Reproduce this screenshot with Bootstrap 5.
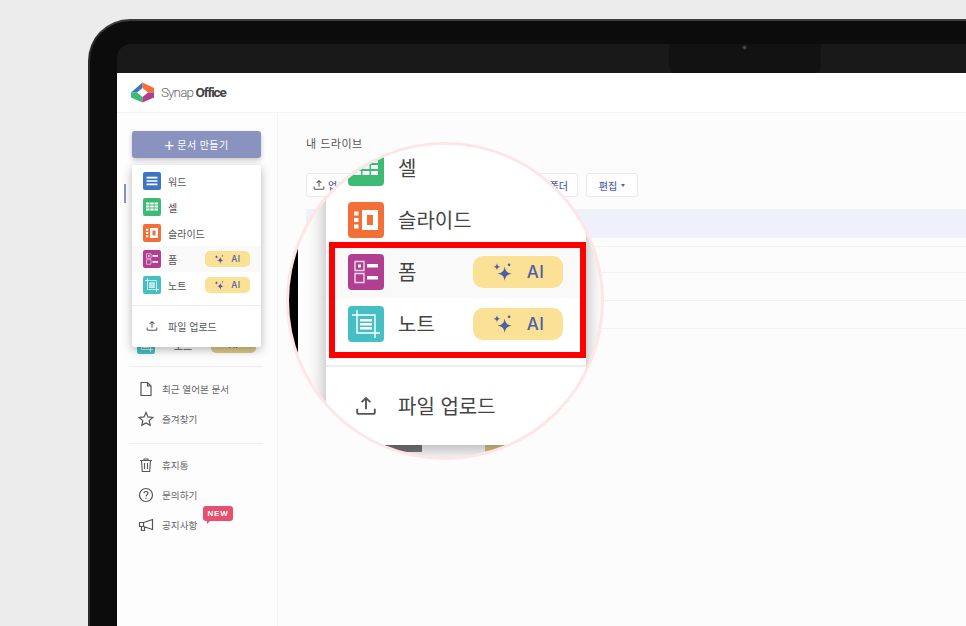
<!DOCTYPE html>
<html lang="ko">
<head>
    <meta charset="UTF-8">
    <title>Synap Office</title>
    <link href="https://cdn.jsdelivr.net/npm/bootstrap@5.3.0/dist/css/bootstrap.min.css" rel="stylesheet">
    <style>
        html, body { height: 100%; }
        body { margin: 0; width: 966px; height: 626px; overflow: hidden; background: #ececec; font-family: "Noto Sans CJK KR", "Noto Sans", sans-serif; color: #555; position: relative; }
        .laptop { margin: 19px 0 0 88px; height: 607px; background: #0c0c0c; border-radius: 42px 0 0 0; border-top: 2px solid #3c3d40; border-left: 2px solid #2a2b2e; padding: 23px 0 0 27px; }
        .bezel { height: 100%; background: #191919; border-radius: 14px 0 0 0; }
        .bezel-top { height: 29px; }
        .notch { position: relative; margin-left: 552px; width: 152px; height: 29px; background: #121212; border-radius: 0 0 6px 6px; }
        .camera { position: absolute; left: 73px; top: 1px; width: 5px; height: 5px; border-radius: 50%; background: #4a4a4a; border: 1px solid #222; }
        .screen { height: 553px; background: #fcfcfc; }
        .top-bar { height: 40px; background: #fff; border-bottom: 1px solid #f3f3f3; padding: 0 0 0 13px; }
        .logo-text { font-family: Roboto, sans-serif; font-size: 13.5px; letter-spacing: -.9px; margin-left: 6px; color: #666; font-weight: 300; }
        .logo-text b { color: #444; font-weight: 700; letter-spacing: -1.1px; }
        .side { position: relative; width: 161px; flex: none; background: #fdfdfd; border-right: 1px solid #f3f3f3; padding: 18px 15px 0 13px; }
        .make-btn { width: 129px; height: 27px; margin-left: 2px; padding: 0; border: 0; border-radius: 3px; background: #8a92c0; color: #fff; font-size: 10px; letter-spacing: .4px; box-shadow: 0 2px 5px rgba(0,0,0,.22); }
        .make-btn:hover { background: #8a92c0; color: #fff; }
        .plus { font-size: 17px; line-height: 1; margin-right: 3px; font-weight: 400; }
        .side-mark { position: absolute; left: 7px; top: 71px; width: 2px; height: 19px; background: #8a92c0; }
        .hidden-row { margin: 178px 0 0 7px; height: 18px; padding-right: 6px; font-size: 10px; }
        .side-line { border-top: 1px solid #ececec; margin-top: 12px; width: 133px; }
        .side-line.second { margin-top: 9px; }
        .side-link { height: 30px; padding-left: 8px; font-size: 9.6px; color: #666; }
        .side-link.after-line { margin-top: 7px; }
        .side-link.after-second { margin-top: 6px; }
        .side-link svg { width: 16px; height: 16px; flex: none; margin-right: 8px; color: #555; }
        .new-tag { position: absolute; left: 73px; top: -4px; width: 30px; height: 15px; background: #e8506f; color: #fff; border-radius: 3px; font: 700 8px/15px "Liberation Sans", sans-serif; letter-spacing: .8px; text-align: center; }
        .new-tag::after { content: ""; position: absolute; left: 4px; bottom: -3px; border-left: 3px solid #e8506f; border-bottom: 3px solid transparent; }
        .pop-menu { position: absolute; left: 15px; top: 52px; width: 129px; height: 182px; background: #fff; border-radius: 2px; box-shadow: 0 3px 10px rgba(0,0,0,.28); padding-top: 3px; font-size: 10px; color: #555; }
        .pop-row { height: 26px; padding: 0 11px; }
        .pop-row.on { background: #f9f9f9; }
        .pop-row svg.app { width: 18px; height: 18px; margin-right: 7px; flex: none; }
        .ai-tag { background: #fbe196; border-radius: 5px; width: 45px; height: 16px; color: #4f5fa5; font: 500 8.5px/16px Inter, sans-serif; letter-spacing: .5px; gap: 6px; }
        .ai-tag svg { width: 11px; height: 11px; }
        .ai-dim { background: #dfc98a; }
        .pop-line { border-top: 1px solid #ececec; margin-top: 7px; }
        .pop-up { height: 40px; padding: 0 14px; }
        .pop-up svg { width: 12px; height: 12px; margin-right: 10px; color: #555; }
        .main-area { padding: 21px 0 0 28px; }
        .drive-title { font-size: 11px; line-height: 18px; color: #555; letter-spacing: .5px; }
        .tools { margin-top: 21px; height: 24px; }
        .tool-btn { height: 24px; background: #fff; border: 1px solid #e9e9e9; border-radius: 3px; color: #5464a8; font-size: 10px; font-weight: 500; padding: 0 9px; }
        .tool-btn svg { width: 12px; height: 12px; margin-right: 3px; color: #555; }
        .tool-one { width: 90px; justify-content: flex-start; padding-left: 6px; }
        .tool-two { width: 82px; margin-left: 100px; justify-content: flex-end; }
        .tool-three { width: 52px; margin-left: 8px; }
        .caret-down { border-top: 3px solid #5464a8; border-left: 2.5px solid transparent; border-right: 2.5px solid transparent; margin-left: 4px; }
        .file-list { margin: 12px 0 0 0; }
        .file-sel { height: 29px; background: #eef1fa; }
        .file-row { border-bottom: 1px solid #f2f2f2; height: 28px; }
        .file-row.first { height: 9px; }
        .file-row.short { height: 26px; }
        .lens { position: absolute; left: 286px; top: 142px; width: 318px; height: 318px; border: 3px solid #fde6e5; border-radius: 50%; background: #fdfdfd; overflow: hidden; }
        .lens-dark { width: 9px; flex: none; background: #000; }
        .lens-body { margin-left: 28px; width: 260px; margin-top: -3px; }
        .lens-menu { position: relative; z-index: 1; height: 303px; background: #fff; box-shadow: 0 4px 18px rgba(0,0,0,.32); color: #444; font-size: 20px; }
        .lens-row { height: 52px; padding-left: 22px; }
        .lens-row.on { background: #f9f9f9; }
        .lens-row svg.app { width: 36px; height: 36px; margin-right: 14px; flex: none; }
        .lens-ai { width: 90px; height: 32px; background: #fbe196; border-radius: 10px; color: #4f5fa5; font: 500 17px/32px Inter, sans-serif; letter-spacing: .5px; gap: 13px; margin-left: auto; margin-right: 23px; }
        .lens-ai svg { width: 22px; height: 22px; }
        .lens-line { border-top: 2px solid #ececec; margin-top: 15px; }
        .lens-up { height: 78px; padding-left: 29px; }
        .lens-up svg { width: 22px; height: 22px; margin-right: 21px; color: #555; }
        .lens-peek { height: 7px; padding-left: 59px; gap: 63px; }
        .peek-dark { width: 37px; height: 7px; background: #777; }
        .peek-tan { width: 40px; height: 7px; background: #d9c486; }
        .red-box { position: absolute; left: 40px; top: 97px; width: 257px; height: 116px; border: 6px solid #f00; z-index: 2; }
    </style>
</head>
<body>
    <svg width="0" height="0" class="position-absolute">
        <symbol id="i-word" viewBox="0 0 36 36"><rect width="36" height="36" rx="4" fill="#3f74c0"/><path d="M7 9.500h22v3.400H7zM7 16.300h22v3.400H7zM7 23.100h22v3.400H7z" fill="#fff"/></symbol>
        <symbol id="i-cell" viewBox="0 0 36 36"><rect width="36" height="36" rx="4" fill="#3dba74"/><path d="M6 9h7v4H6zM14.500 9h7v4h-7zM23 9h7v4h-7zM6 15h7v4H6zM14.500 15h7v4h-7zM23 15h7v4h-7zM6 21h7v4H6zM14.500 21h7v4h-7zM23 21h7v4h-7z" fill="#fff"/></symbol>
        <symbol id="i-slide" viewBox="0 0 36 36"><rect width="36" height="36" rx="4" fill="#f36f37"/><path d="M6 9.500h4.500v4H6zM6 16h4.500v4H6zM6 22.500h4.500v4H6zM14 8h16v20H14zm5 5v10h6V13z" fill="#fff" fill-rule="evenodd"/></symbol>
        <symbol id="i-form" viewBox="0 0 36 36"><rect width="36" height="36" rx="4" fill="#b03f91"/><path d="M7 7.500h9v9H7zM7 19.500h9v9H7z" fill="none" stroke="#f3d7ea" stroke-width="1.400"/><path d="M10 10.500h3v3h-3zM19 10h11v3.600H19zM19 22h11v3.600H19z" fill="#fff"/></symbol>
        <symbol id="i-note" viewBox="0 0 36 36"><rect width="36" height="36" rx="4" fill="#45bfc4"/><path d="M9 4v23h23M4 9h23v23" fill="none" stroke="#fff" stroke-width="1.400"/><path d="M12 13h12v2.400H12zM12 17h12v2.400H12zM12 21h12v2.400H12z" fill="#fff"/></symbol>
        <symbol id="i-spark" viewBox="0 0 20 20"><path d="M11.500 5c.6 4.200 2.300 6 6.500 6.500-4.200.6-5.900 2.300-6.500 6.500-.6-4.200-2.300-5.900-6.500-6.500C9.200 11 10.900 9.200 11.500 5z" fill="currentColor"/><path d="M4.500 2c.4 2.200 1.100 3 3.200 3.300-2.100.4-2.800 1.100-3.200 3.200-.4-2.100-1.100-2.800-3.200-3.200C3.400 5 4.100 4.200 4.500 2z" fill="currentColor"/><circle cx="15.500" cy="3.500" r="1.200" fill="currentColor"/></symbol>
        <symbol id="i-up" viewBox="0 0 20 20"><path d="M10 13V3M6 6.500 10 2.700l4 3.800M2 12.500v3.200c0 .9.600 1.500 1.500 1.500h13c.9 0 1.500-.6 1.500-1.500v-3.200" fill="none" stroke="currentColor" stroke-width="1.700"/></symbol>
    </svg>

    <div class="laptop">
        <div class="bezel">
            <div class="bezel-top">
                <div class="notch"><span class="camera"></span></div>
            </div>
            <div class="screen d-flex flex-column">
                <div class="top-bar d-flex align-items-center">
                    <svg width="25" height="21" viewBox="0 0 25 21">
                        <path d="M12.500.5V6L7 10.500H1z" fill="#3f74c0"/>
                        <path d="M12.500.5 24 6v4.500h-6L12.500 6z" fill="#f36f37"/>
                        <path d="M1 10.500v5l11.500 5V15L7 10.500z" fill="#3dba74"/>
                        <path d="M24 10.500v5l-11.500 5V15l5.500-4.500z" fill="#b03f91"/>
                    </svg>
                    <span class="logo-text">Synap <b>Office</b></span>
                </div>
                <div class="d-flex flex-grow-1">
                    <aside class="side">
                        <button class="btn make-btn d-flex align-items-center justify-content-center"><span class="plus">+</span>문서 만들기</button>
                        <span class="side-mark"></span>
                        <div class="hidden-row d-flex align-items-center justify-content-between">
                            <svg width="18" height="18"><use href="#i-note"/></svg>
                            <span>노트</span>
                            <span class="ai-tag ai-dim d-flex align-items-center justify-content-center">AI</span>
                        </div>
                        <div class="side-line"></div>
                        <div class="side-link after-line d-flex align-items-center">
                            <svg viewBox="0 0 16 16" fill="none" stroke="currentColor" stroke-width="1.200"><path d="M3 1.500h6.500L13 5v9.500H3zM9.500 1.500V5H13"/></svg>최근 열어본 문서
                        </div>
                        <div class="side-link d-flex align-items-center">
                            <svg viewBox="0 0 16 16" fill="none" stroke="currentColor" stroke-width="1.200"><path d="m8 1.500 2 4.400 4.800.5-3.600 3.200 1 4.700L8 11.900l-4.200 2.400 1-4.700L1.200 6.400 6 5.900z"/></svg>즐겨찾기
                        </div>
                        <div class="side-line second"></div>
                        <div class="side-link after-second d-flex align-items-center">
                            <svg viewBox="0 0 16 16" fill="none" stroke="currentColor" stroke-width="1.100"><path d="M2 3.500h12M6 3.500V2h4v1.500M3.500 3.500l.8 11h7.400l.8-11M6.500 6v6M9.500 6v6"/></svg>휴지통
                        </div>
                        <div class="side-link d-flex align-items-center">
                            <svg viewBox="0 0 16 16" fill="none" stroke="currentColor" stroke-width="1.200"><circle cx="8" cy="8" r="6.500"/><path d="M6 6.300C6 5 7 4.500 8 4.500s2 .6 2 1.800c0 1.500-2 1.500-2 3.100M8 10.800v1.200"/></svg>문의하기
                        </div>
                        <div class="side-link d-flex align-items-center position-relative">
                            <svg viewBox="0 0 16 16" fill="none" stroke="currentColor" stroke-width="1.200"><path d="M1.500 5.500h4L14.500 2.500v10L5.500 9.500h-4zM5.500 5.500v4M3.500 9.500v4h3v-4"/></svg>공지사항
                            <span class="new-tag">NEW</span>
                        </div>
                        <div class="pop-menu">
                            <div class="pop-row d-flex align-items-center"><svg class="app"><use href="#i-word"/></svg>워드</div>
                            <div class="pop-row d-flex align-items-center"><svg class="app"><use href="#i-cell"/></svg>셀</div>
                            <div class="pop-row d-flex align-items-center"><svg class="app"><use href="#i-slide"/></svg>슬라이드</div>
                            <div class="pop-row on d-flex align-items-center"><svg class="app"><use href="#i-form"/></svg>폼<span class="ai-tag d-flex align-items-center justify-content-center ms-auto"><svg><use href="#i-spark"/></svg>AI</span></div>
                            <div class="pop-row d-flex align-items-center"><svg class="app"><use href="#i-note"/></svg>노트<span class="ai-tag d-flex align-items-center justify-content-center ms-auto"><svg><use href="#i-spark"/></svg>AI</span></div>
                            <div class="pop-line"></div>
                            <div class="pop-up d-flex align-items-center"><svg><use href="#i-up"/></svg>파일 업로드</div>
                        </div>
                    </aside>
                    <main class="main-area flex-grow-1">
                        <div class="drive-title">내 드라이브</div>
                        <div class="tools d-flex">
                            <button class="btn tool-btn tool-one d-flex align-items-center"><svg><use href="#i-up"/></svg>업로드</button>
                            <button class="btn tool-btn tool-two d-flex align-items-center">새 폴더</button>
                            <button class="btn tool-btn tool-three d-flex align-items-center justify-content-center">편집<span class="caret-down"></span></button>
                        </div>
                        <div class="file-list">
                            <div class="file-sel"></div>
                            <div class="file-row first"></div>
                            <div class="file-row short"></div>
                            <div class="file-row"></div>
                            <div class="file-row"></div>
                        </div>
                    </main>
                </div>
            </div>
        </div>
    </div>

    <div class="lens d-flex">
        <div class="lens-dark"></div>
        <div class="lens-body">
            <div class="lens-menu">
                <div class="lens-row d-flex align-items-center"><svg class="app"><use href="#i-cell"/></svg>셀</div>
                <div class="lens-row d-flex align-items-center"><svg class="app"><use href="#i-slide"/></svg>슬라이드</div>
                <div class="lens-row on d-flex align-items-center"><svg class="app"><use href="#i-form"/></svg>폼<span class="lens-ai d-flex align-items-center justify-content-center"><svg><use href="#i-spark"/></svg>AI</span></div>
                <div class="lens-row d-flex align-items-center"><svg class="app"><use href="#i-note"/></svg>노트<span class="lens-ai d-flex align-items-center justify-content-center"><svg><use href="#i-spark"/></svg>AI</span></div>
                <div class="lens-line"></div>
                <div class="lens-up d-flex align-items-center"><svg><use href="#i-up"/></svg>파일 업로드</div>
            </div>
            <div class="lens-peek d-flex">
                <span class="peek-dark"></span>
                <span class="peek-tan"></span>
            </div>
        </div>
        <div class="red-box"></div>
    </div>
    <script src="https://cdn.jsdelivr.net/npm/bootstrap@5.3.0/dist/js/bootstrap.bundle.min.js"></script>
</body>
</html>
